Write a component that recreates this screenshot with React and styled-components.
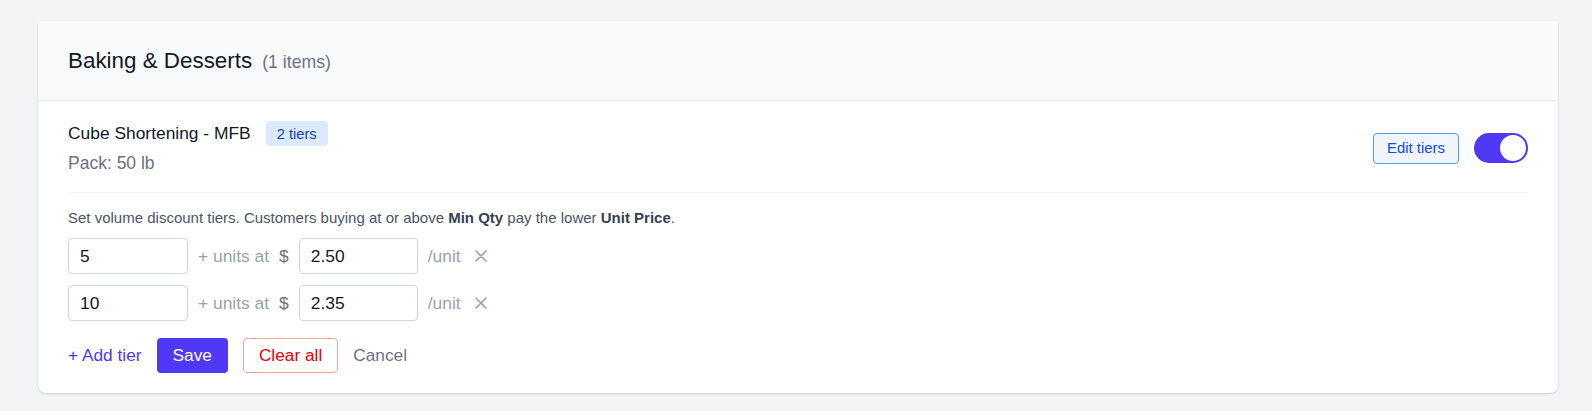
import { useState } from 'react'
import styled, { createGlobalStyle } from 'styled-components'

const GlobalStyle = createGlobalStyle`
  body {
    margin: 0;
    background: #f3f4f6;
    font-family: "Liberation Sans", Arial, sans-serif;
  }
`

const Page = styled.div`
  padding: 21px 34px 18px 38px;
`

const Card = styled.section`
  background: #ffffff;
  border-radius: 0 0 8px 8px;
  box-shadow: 0 1px 3px rgba(0, 0, 0, 0.1), 0 1px 2px rgba(0, 0, 0, 0.06);
`

const Header = styled.header`
  height: 79px;
  display: flex;
  align-items: center;
  padding: 0 30px;
  background: #f9fafb;
  border-bottom: 1px solid #e5e7eb;
`

const Title = styled.h2`
  margin: 0;
  font-size: 22.4px;
  font-weight: 400;
  color: #101828;

  & span {
    margin-left: 10px;
    font-size: 17.7px;
    color: #6a7282;
  }
`

const Body = styled.div`
  padding: 0 30px 20px;
`

const ItemRow = styled.div`
  display: flex;
  justify-content: space-between;
  align-items: center;
  padding: 20px 0 17px;
  border-bottom: 1px solid #f3f4f6;
`

const NameLine = styled.div`
  display: flex;
  align-items: center;
  gap: 15px;
  height: 25px;
  font-size: 17.4px;
  color: #101828;
`

const Badge = styled.span`
  display: inline-flex;
  align-items: center;
  height: 25px;
  padding: 0 11px;
  border-radius: 4px;
  background: #dbeafe;
  color: #193cb8;
  font-size: 14.7px;
`

const Pack = styled.div`
  margin-top: 5px;
  font-size: 17.5px;
  line-height: 24px;
  color: #6a7282;
`

const Actions = styled.div`
  display: flex;
  align-items: center;
  gap: 15px;
`

const EditButton = styled.button`
  height: 31px;
  padding: 0 13px;
  border: 1px solid #519bf7;
  border-radius: 4px;
  background: #eff6ff;
  color: #1447e6;
  font-family: inherit;
  font-size: 14.9px;
  cursor: pointer;
`

const Toggle = styled.button`
  position: relative;
  width: 54px;
  height: 30px;
  padding: 0;
  border: none;
  border-radius: 15px;
  background: ${({ $on }) => ($on ? '#4f39f6' : '#d1d5dc')};
  cursor: pointer;

  &::after {
    content: '';
    position: absolute;
    top: 2px;
    left: ${({ $on }) => ($on ? '26px' : '2px')};
    width: 26px;
    height: 26px;
    border-radius: 50%;
    background: #ffffff;
  }
`

const Tiers = styled.div`
  padding-top: 15px;
`

const Hint = styled.p`
  margin: 0 0 10px;
  font-size: 15px;
  line-height: 20px;
  color: #4a5565;

  & b {
    color: #364153;
  }
`

const TierRow = styled.div`
  display: flex;
  align-items: center;
  gap: 10px;
  margin-bottom: 11px;
  font-size: 17.4px;
`

const Input = styled.input`
  box-sizing: border-box;
  width: ${({ $width }) => $width || '120px'};
  height: 36px;
  padding: 0 11px;
  border: 1px solid #d1d5dc;
  border-radius: 4px;
  font-family: inherit;
  font-size: 17.4px;
  color: #101828;
  outline: none;
`

const Muted = styled.span`
  color: ${({ $dark }) => ($dark ? '#6a7282' : '#99a1af')};
`

const RemoveButton = styled.button`
  display: flex;
  align-items: center;
  padding: 0 4px;
  border: none;
  background: none;
  cursor: pointer;
`

const Footer = styled.div`
  display: flex;
  align-items: center;
  gap: 15px;
  margin-top: 17px;
`

const TextButton = styled.button`
  padding: 0;
  border: none;
  background: none;
  font-family: inherit;
  font-size: 17.3px;
  color: ${({ $color }) => $color};
  cursor: pointer;
`

const Button = styled.button`
  box-sizing: border-box;
  height: 35px;
  padding: 0 ${({ $outline }) => ($outline ? '15px' : '16px')};
  border: ${({ $outline }) => ($outline ? '1px solid #ffa2a2' : 'none')};
  border-radius: 4px;
  background: ${({ $outline }) => ($outline ? '#ffffff' : '#4f39f6')};
  color: ${({ $outline }) => ($outline ? '#e7000b' : '#ffffff')};
  font-family: inherit;
  font-size: 17.3px;
  cursor: pointer;
`

const XIcon = () => (
  <svg width="12" height="12" viewBox="0 0 12 12">
    <path d="M1 1L11 11M11 1L1 11" stroke="#99a1af" strokeWidth="1.6" strokeLinecap="round" />
  </svg>
)

export default function App() {
  const [enabled, setEnabled] = useState(true)
  const [tiers, setTiers] = useState([
    { qty: '5', price: '2.50' },
    { qty: '10', price: '2.35' },
  ])

  const updateTier = (index, key, value) => {
    setTiers(tiers.map((tier, i) => (i === index ? { ...tier, [key]: value } : tier)))
  }

  return (
    <Page>
      <GlobalStyle />
      <Card>
        <Header>
          <Title>
            Baking &amp; Desserts<span>(1 items)</span>
          </Title>
        </Header>
        <Body>
          <ItemRow>
            <div>
              <NameLine>
                Cube Shortening - MFB
                <Badge>{tiers.length} tiers</Badge>
              </NameLine>
              <Pack>Pack: 50 lb</Pack>
            </div>
            <Actions>
              <EditButton>Edit tiers</EditButton>
              <Toggle $on={enabled} onClick={() => setEnabled(!enabled)} aria-label="Enable tiers" />
            </Actions>
          </ItemRow>
          <Tiers>
            <Hint>
              Set volume discount tiers. Customers buying at or above <b>Min Qty</b> pay the lower <b>Unit Price</b>.
            </Hint>
            {tiers.map((tier, i) => (
              <TierRow key={i}>
                <Input value={tier.qty} onChange={(e) => updateTier(i, 'qty', e.target.value)} />
                <Muted>+ units at</Muted>
                <Muted $dark>$</Muted>
                <Input $width="119px" value={tier.price} onChange={(e) => updateTier(i, 'price', e.target.value)} />
                <Muted>/unit</Muted>
                <RemoveButton onClick={() => setTiers(tiers.filter((_, j) => j !== i))}>
                  <XIcon />
                </RemoveButton>
              </TierRow>
            ))}
            <Footer>
              <TextButton $color="#4f39f6" onClick={() => setTiers([...tiers, { qty: '', price: '' }])}>
                + Add tier
              </TextButton>
              <Button>Save</Button>
              <Button $outline onClick={() => setTiers([])}>
                Clear all
              </Button>
              <TextButton $color="#6a7282">Cancel</TextButton>
            </Footer>
          </Tiers>
        </Body>
      </Card>
    </Page>
  )
}
